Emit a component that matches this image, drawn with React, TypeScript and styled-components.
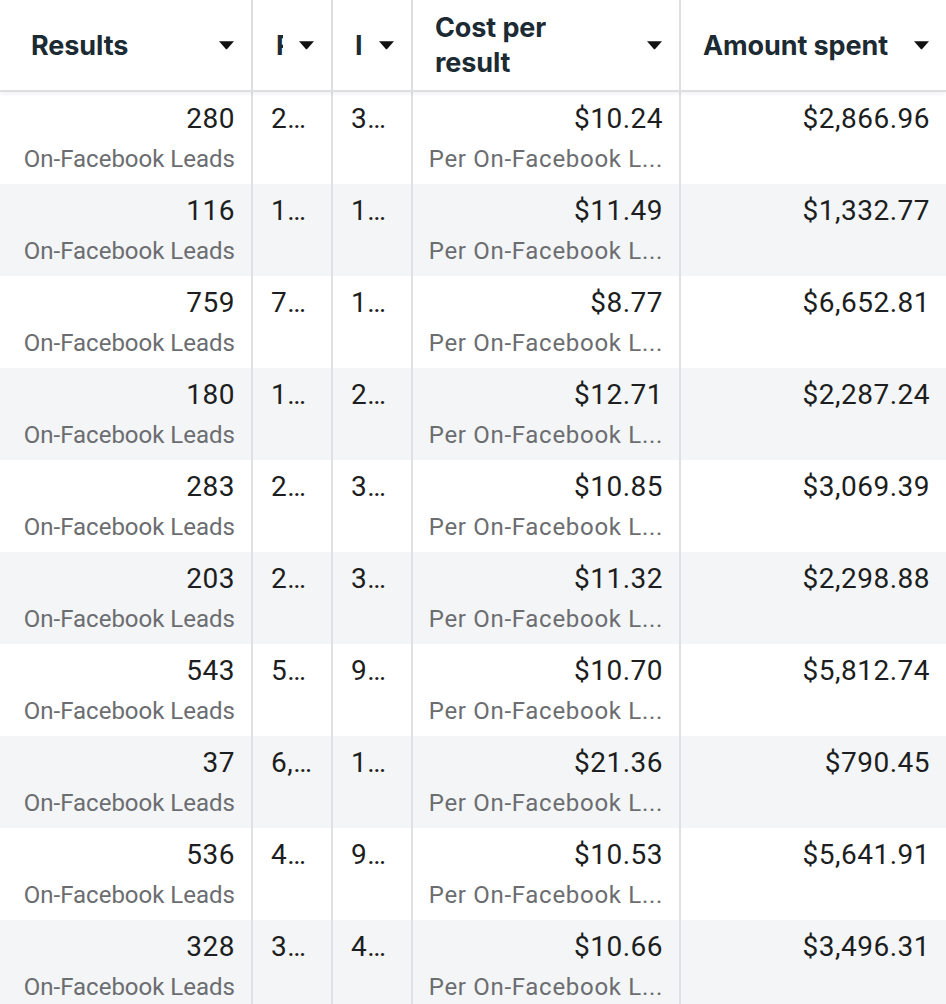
import React from "react";
import styled, { createGlobalStyle } from "styled-components";

const GlobalStyle = createGlobalStyle`
  html, body { margin: 0; padding: 0; background: #ffffff; }
  body { font-family: Roboto, "Liberation Sans", sans-serif; overflow: hidden; }
`;

const COLS = "253px 80px 80px 268px 1fr";

const Table = styled.div`
  width: 946px;
  height: 1004px;
  overflow: hidden;
  background: #ffffff;
`;

const HeaderRow = styled.div`
  display: grid;
  grid-template-columns: ${COLS};
  height: 90px;
  border-bottom: 2px solid #dcdee1;
  box-shadow: 0 2px 4px rgba(0, 0, 0, 0.06);
  position: relative;
  z-index: 1;
  background: #ffffff;
`;

const HeaderCell = styled.div<{ $padLeft?: number; $last?: boolean }>`
  display: flex;
  align-items: center;
  justify-content: space-between;
  gap: 8px;
  padding: 0 16px 0 ${(p) => p.$padLeft ?? 22}px;
  border-right: ${(p) => (p.$last ? "none" : "2px solid #dcdee1")};
  min-width: 0;
`;

const HeaderLabel = styled.div<{ $clip?: number }>`
  font-family: Inter, "Noto Sans", sans-serif;
  font-weight: 700;
  font-size: 27px;
  line-height: 35px;
  color: #1c2b33;
  letter-spacing: -0.1px;
  overflow: hidden;
  white-space: nowrap;
  ${(p) => (p.$clip ? `width: ${p.$clip}px;` : "")}
`;

const Caret = styled.svg`
  flex: none;
  width: 17px;
  height: 10px;
`;

const Row = styled.div<{ $alt: boolean }>`
  display: grid;
  grid-template-columns: ${COLS};
  height: 92px;
  background: ${(p) => (p.$alt ? "#f3f5f6" : "#ffffff")};
`;

const Cell = styled.div<{ $align: "left" | "right"; $last?: boolean }>`
  display: flex;
  flex-direction: column;
  align-items: ${(p) => (p.$align === "right" ? "flex-end" : "flex-start")};
  padding: 9px 16px 0 18px;
  border-right: ${(p) => (p.$last ? "none" : "2px solid #dfe1e4")};
  min-width: 0;
  overflow: hidden;
`;

const Value = styled.div`
  font-size: 28px;
  line-height: 36px;
  letter-spacing: 0.5px;
  color: #1c1e21;
  white-space: nowrap;
`;

const Sub = styled.div<{ $tracking?: number }>`
  font-size: 24px;
  line-height: 44px;
  letter-spacing: ${(p) => p.$tracking ?? 0}px;
  color: #6b6d70;
  white-space: nowrap;
`;

const CaretIcon = () => (
  <Caret viewBox="0 0 17 10">
    <path d="M1 1.2h15l-6.6 7.6a1.2 1.2 0 0 1-1.8 0z" fill="#111" />
  </Caret>
);

type RowData = {
  results: string;
  reach: string;
  impressions: string;
  cost: string;
  spent: string;
};

const rows: RowData[] = [
  { results: "280", reach: "2…", impressions: "3…", cost: "$10.24", spent: "$2,866.96" },
  { results: "116", reach: "1…", impressions: "1…", cost: "$11.49", spent: "$1,332.77" },
  { results: "759", reach: "7…", impressions: "1…", cost: "$8.77", spent: "$6,652.81" },
  { results: "180", reach: "1…", impressions: "2…", cost: "$12.71", spent: "$2,287.24" },
  { results: "283", reach: "2…", impressions: "3…", cost: "$10.85", spent: "$3,069.39" },
  { results: "203", reach: "2…", impressions: "3…", cost: "$11.32", spent: "$2,298.88" },
  { results: "543", reach: "5…", impressions: "9…", cost: "$10.70", spent: "$5,812.74" },
  { results: "37", reach: "6,…", impressions: "1…", cost: "$21.36", spent: "$790.45" },
  { results: "536", reach: "4…", impressions: "9…", cost: "$10.53", spent: "$5,641.91" },
  { results: "328", reach: "3…", impressions: "4…", cost: "$10.66", spent: "$3,496.31" },
];

export default function App() {
  return (
    <>
      <GlobalStyle />
      <Table>
        <HeaderRow>
          <HeaderCell $padLeft={31}>
            <HeaderLabel>Results</HeaderLabel>
            <CaretIcon />
          </HeaderCell>
          <HeaderCell $padLeft={23}>
            <HeaderLabel $clip={7}>Reach</HeaderLabel>
            <CaretIcon />
          </HeaderCell>
          <HeaderCell $padLeft={22}>
            <HeaderLabel $clip={7}>Impressions</HeaderLabel>
            <CaretIcon />
          </HeaderCell>
          <HeaderCell>
            <HeaderLabel>
              Cost per
              <br />
              result
            </HeaderLabel>
            <CaretIcon />
          </HeaderCell>
          <HeaderCell $last>
            <HeaderLabel>Amount spent</HeaderLabel>
            <CaretIcon />
          </HeaderCell>
        </HeaderRow>
        {rows.map((r, i) => (
          <Row key={i} $alt={i % 2 === 1}>
            <Cell $align="right">
              <Value>{r.results}</Value>
              <Sub>On-Facebook Leads</Sub>
            </Cell>
            <Cell $align="left">
              <Value>{r.reach}</Value>
            </Cell>
            <Cell $align="left">
              <Value>{r.impressions}</Value>
            </Cell>
            <Cell $align="right">
              <Value>{r.cost}</Value>
              <Sub $tracking={0.7}>Per On-Facebook L...</Sub>
            </Cell>
            <Cell $align="right" $last>
              <Value>{r.spent}</Value>
            </Cell>
          </Row>
        ))}
      </Table>
    </>
  );
}
